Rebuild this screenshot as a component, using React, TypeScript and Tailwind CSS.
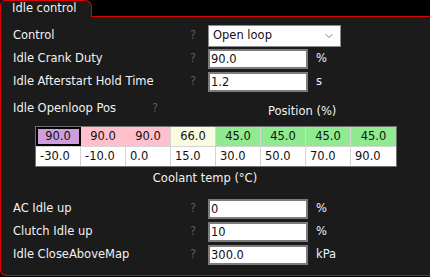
import { ChevronDown } from 'lucide-react';

const ROW1 = [
  { v: '90.0', bg: 'bg-[#cc9edc]', sel: true },
  { v: '90.0', bg: 'bg-[#ffc0cb]' },
  { v: '90.0', bg: 'bg-[#ffc0cb]' },
  { v: '66.0', bg: 'bg-[#f8fbe0]' },
  { v: '45.0', bg: 'bg-[#90ea90]' },
  { v: '45.0', bg: 'bg-[#90ea90]' },
  { v: '45.0', bg: 'bg-[#90ea90]' },
  { v: '45.0', bg: 'bg-[#90ea90]' },
];

const ROW2 = ['-30.0', '-10.0', '0.0', '15.0', '30.0', '50.0', '70.0', '90.0'];

function Help() {
  return <span className="w-[8px] text-center text-[#5a5a5a]">?</span>;
}

function FieldRow({ label, value, unit }: { label: string; value: string; unit: string }) {
  return (
    <div className="flex items-center h-[20px]">
      <span className="w-[176px]">{label}</span>
      <Help />
      <div className="ml-[11px] w-[100px] h-[20px] bg-white border-2 border-[#7c7c7c] text-[#111] pl-[1px] leading-[16px]">
        {value}
      </div>
      <span className="ml-[8px] text-[#e8f2ff]">{unit}</span>
    </div>
  );
}

export default function App() {
  return (
    <div className="w-[430px] h-[277px] bg-black text-[#f2f2f2] text-[11.5px] font-['DejaVu_Sans',sans-serif] flex flex-col overflow-hidden">
      <div className="flex h-[17px] shrink-0">
        <div className="w-[92px] border border-b-0 border-[#e00000] rounded-tl-[5px] rounded-tr-[7px] bg-[#1b1b1b] pl-[11px] leading-[15px]">
          Idle control
        </div>
        <div className="flex-1 border-b border-[#e00000]" />
      </div>

      <div className="h-[259px] border-l border-b border-[#e00000] rounded-bl-[6px] bg-[#1b1b1b] pl-[12px] pt-[8px]">
        <div className="flex items-center h-[22px]">
          <span className="w-[176px]">Control</span>
          <Help />
          <div className="ml-[11px] w-[133px] h-[22px] bg-white border border-[#8a8a8a] text-[#1a0a20] pl-[4px] pr-[5px] flex items-center justify-between">
            <span>Open loop</span>
            <ChevronDown className="w-[12px] h-[12px] text-[#555]" strokeWidth={1.5} />
          </div>
        </div>

        <div className="flex flex-col gap-[3px] mt-[2px]">
          <FieldRow label="Idle Crank Duty" value="90.0" unit="%" />
          <FieldRow label="Idle Afterstart Hold Time" value="1.2" unit="s" />
        </div>

        <div className="flex h-[26px] mt-[5px]">
          <span className="w-[138px] pt-[3px]">Idle Openloop Pos</span>
          <span className="w-[8px] text-center text-[#5a5a5a] pt-[3px]">?</span>
          <span className="ml-[109px] self-end mb-[3px]">Position (%)</span>
        </div>

        <div className="ml-[22px] mt-[3px] w-[362px] border border-[#707070] bg-white text-[#111]">
          <div className="flex h-[19px]">
            {ROW1.map((c, i) => (
              <div
                key={i}
                className={`w-[45px] h-[19px] flex items-center justify-center ${c.bg} ${
                  i < 7 ? 'border-r border-[#d4d4d4]' : ''
                } ${c.sel ? 'outline-2 -outline-offset-2 outline-black' : ''}`}
              >
                {c.v}
              </div>
            ))}
          </div>
          <div className="flex h-[20px] border-t border-[#d4d4d4]">
            {ROW2.map((v, i) => (
              <div
                key={i}
                className={`w-[45px] h-[19px] flex items-center pl-[4px] ${
                  i < 7 ? 'border-r border-[#d4d4d4]' : ''
                }`}
              >
                {v}
              </div>
            ))}
          </div>
        </div>

        <div className="w-[384px] text-center mt-[4px] leading-[14px]">Coolant temp (°C)</div>

        <div className="flex flex-col gap-[3px] mt-[14px]">
          <FieldRow label="AC Idle up" value="0" unit="%" />
          <FieldRow label="Clutch Idle up" value="10" unit="%" />
          <FieldRow label="Idle CloseAboveMap" value="300.0" unit="kPa" />
        </div>
      </div>
    </div>
  );
}
